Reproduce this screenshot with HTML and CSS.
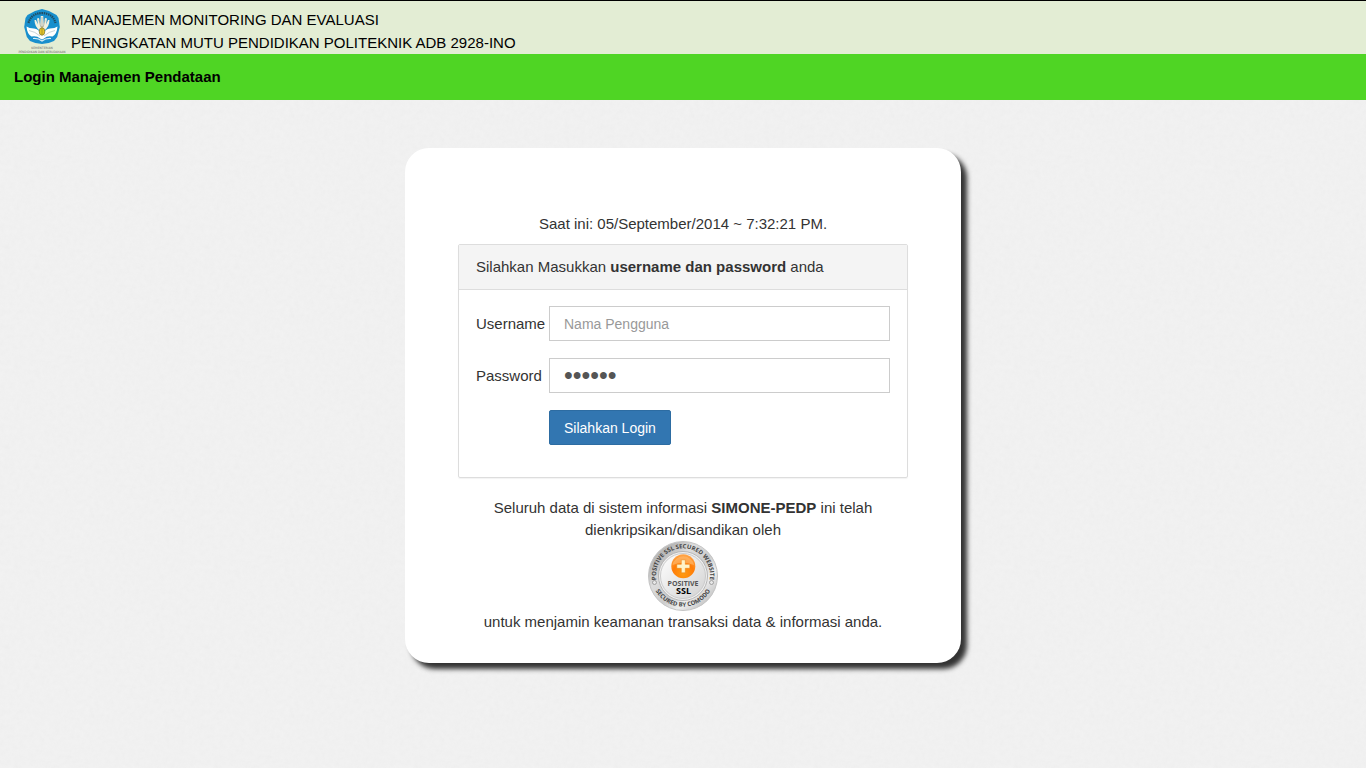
FILE: index.html
```html
<!DOCTYPE html>
<html lang="id">
<head>
<meta charset="utf-8">
<meta name="viewport" content="width=device-width, initial-scale=1">
<title>Login Manajemen Pendataan</title>
<link rel="stylesheet" href="styles.css">
</head>
<body>
<header class="banner">
  <svg class="banner-logo" viewBox="0 0 56 46" role="img" aria-label="Kementerian Pendidikan dan Kebudayaan">
    <path d="M28 1 L35 3 L42.500 7 L44.500 10 L45.800 19 L43.200 29 L40 33 Q34 36 28 36 Q22 36 16 33 L12.800 29 L10.200 19 L11.500 10 L13.500 7 L21 3 Z" fill="#188fcd"/>
    <path d="M14.500 15 Q17 5.500 28 5 Q39 5.500 41.500 15" fill="none" stroke="#214d61" stroke-width="2.200" stroke-dasharray="1.500 .7"/>
    <path d="M26.300 23 Q20.500 19 20.500 12 L22 12 L24 16.500 L23 10.500 L25 10 L26.200 16 L26.800 8 H29.200 L29.800 16 L31 10 L33 10.500 L32 16.500 L34 12 L35.500 12 Q35.500 19 29.700 23 Z" fill="#f2f1df"/>
    <path d="M28 9 V19 M25 12 L26.800 19 M31 12 L29.200 19" stroke="#8c9690" stroke-width=".6" fill="none"/>
    <path d="M12.500 18.500 Q15 20.500 20 20.500 Q25 21 26 25 L28 27 L30 25 Q31 21 36 20.500 Q41 20.500 43.500 18.500 Q43 26 38.500 28.500 Q33 27.500 30 30.500 L28 31.500 L26 30.500 Q23 27.500 17.500 28.500 Q13 26 12.500 18.500 Z" fill="#fff"/>
    <path d="M15 22.500 Q21 23.500 26 28 M41 22.500 Q35 23.500 30 28" stroke="#9fb5bd" stroke-width=".6" fill="none"/>
    <path d="M19 30.500 Q24 30 28 33 Q32 30 37 30.500" stroke="#d8edf5" stroke-width="1.200" fill="none"/>
    <ellipse cx="28" cy="23.500" rx="2.800" ry="3.800" fill="#e4c52b" stroke="#777133" stroke-width=".7"/>
    <path d="M28 18 V27" stroke="#8b7925" stroke-width=".6"/>
    <text x="28" y="41" text-anchor="middle" class="logo-caption">KEMENTERIAN</text>
    <text x="28" y="45" text-anchor="middle" class="logo-caption">PENDIDIKAN DAN KEBUDAYAAN</text>
  </svg>
  <div class="banner-title">MANAJEMEN MONITORING DAN EVALUASI<br>PENINGKATAN MUTU PENDIDIKAN POLITEKNIK ADB 2928-INO</div>
</header>
<h1 class="title-bar">Login Manajemen Pendataan</h1>
<main class="login-card">
  <p class="clock">Saat ini: 05/September/2014 ~ 7:32:21 PM.</p>
  <section class="panel">
    <h2 class="panel-heading">Silahkan Masukkan <strong>username dan password</strong> anda</h2>
    <form class="login-form">
      <label for="username">Username</label>
      <input class="field" id="username" type="text" placeholder="Nama Pengguna">
      <label for="password">Password</label>
      <input class="field field-password" id="password" type="password" value="simone">
      <button class="login-button" type="submit">Silahkan Login</button>
    </form>
  </section>
  <p class="security-note">Seluruh data di sistem informasi <strong>SIMONE-PEDP</strong> ini telah dienkripsikan/disandikan oleh</p>
  <svg class="seal" viewBox="0 0 70 70" role="img" aria-label="Positive SSL">
    <defs>
      <linearGradient id="rim" x1="0" y1="0" x2="1" y2="1">
        <stop offset="0" stop-color="#bdbdbd"/><stop offset=".2" stop-color="#b8b8b8"/><stop offset=".35" stop-color="#ddd"/><stop offset=".55" stop-color="#ccc"/><stop offset=".7" stop-color="#eee"/><stop offset="1" stop-color="#a6a6a6"/>
      </linearGradient>
      <linearGradient id="face" x1="0" y1="0" x2="1" y2="1">
        <stop offset="0" stop-color="#fff"/><stop offset="1" stop-color="#d2d2d2"/>
      </linearGradient>
      <radialGradient id="orb" cx=".5" cy=".8" r=".8">
        <stop offset="0" stop-color="#ff9c12"/><stop offset=".55" stop-color="#ff7d08"/><stop offset="1" stop-color="#ffa64a"/>
      </radialGradient>
      <path id="arc-top" d="M8.400 39 A27 27 0 1 1 61.600 39"/>
      <path id="arc-bottom" d="M4.500 42 A31.500 31.500 0 0 0 65.500 42"/>
    </defs>
    <circle cx="35" cy="35" r="34.500" fill="url(#rim)" stroke="#c4c4c4"/>
    <circle cx="35" cy="35" r="24.500" fill="#eee" stroke="#aaa" stroke-width=".8"/>
    <circle cx="35" cy="35" r="22.500" fill="url(#face)" stroke="#c2c2c2" stroke-width=".8"/>
    <text class="seal-rim"><textPath href="#arc-top" startOffset="50%" text-anchor="middle">POSITIVE SSL SECURED WEBSITE</textPath></text>
    <text class="seal-rim"><textPath href="#arc-bottom" startOffset="50%" text-anchor="middle">SECURED BY COMODO</textPath></text>
    <g fill="#e8e8e8" stroke="#888" stroke-width=".7"><circle cx="6.500" cy="41.500" r="2"/><circle cx="63.500" cy="41.500" r="2"/></g>
    <circle cx="35.300" cy="25.300" r="12" fill="url(#orb)"/>
    <path d="M24.500 24 A11 11 0 0 1 46 24 Q35 20 24.500 24 Z" fill="#ffc27c" opacity=".55"/>
    <path d="M33.300 18.800 H37.300 V23.300 H41.800 V27.300 H37.300 V31.800 H33.300 V27.300 H28.800 V23.300 H33.300 Z" fill="#fff3c8" stroke="#e97c0c" stroke-width=".5"/>
    <text x="35" y="45" text-anchor="middle" class="seal-name">POSITIVE</text>
    <text x="35.500" y="53" text-anchor="middle" class="seal-ssl">SSL</text>
  </svg>
  <p class="security-note">untuk menjamin keamanan transaksi data &amp; informasi anda.</p>
</main>
</body>
</html>
```
FILE: styles.css
```css
* {
  box-sizing: border-box;
}

body {
  margin: 0;
  background-color: #f2f2f2;
  background-image: url("data:image/svg+xml,%3Csvg xmlns='http://www.w3.org/2000/svg' width='200' height='200'%3E%3Cfilter id='n' x='0' y='0' width='1' height='1'%3E%3CfeTurbulence type='fractalNoise' baseFrequency='.2' numOctaves='3' stitchTiles='stitch'/%3E%3CfeColorMatrix type='saturate' values='0'/%3E%3C/filter%3E%3Crect width='200' height='200' filter='url(%23n)' opacity='.05'/%3E%3C/svg%3E");
  color: #333;
  font-family: "Liberation Sans", Arial, sans-serif;
  font-size: 15px;
  line-height: 22px;
}

p {
  margin: 0;
}

.banner {
  display: flex;
  gap: 1px;
  height: 54px;
  padding: 7px 14px 0;
  border-top: 1px solid #000;
  background: #e3edd4;
  color: #000;
}

.banner-logo {
  flex: none;
  width: 56px;
  height: 46px;
}

.logo-caption {
  fill: #666;
  font-family: "DejaVu Sans", sans-serif;
  font-size: 3px;
}

.banner-title {
  font-size: 15px;
  line-height: 23px;
}

.title-bar {
  margin: 0 0 48px;
  padding: 12px 14px;
  background: #4fd524;
  color: #000;
  font-size: 15px;
  line-height: 22px;
}

.login-card {
  max-width: 556px;
  margin: 0 auto 48px;
  padding: 65px 53px 30px;
  border-radius: 24px;
  background: #fff;
  box-shadow: 6px 6px 5px #333;
  text-align: center;
}

.clock {
  margin-bottom: 9px;
}

.panel {
  margin-bottom: 19px;
  border: 1px solid #ddd;
  border-radius: 2px;
  box-shadow: 0 1px 1px rgba(0, 0, 0, 0.05);
  text-align: left;
}

.panel-heading {
  margin: 0;
  padding: 11px 17px;
  border-bottom: 1px solid #ddd;
  background: #f4f4f4;
  font-size: 15px;
  font-weight: normal;
  line-height: 22px;
}

.login-form {
  display: grid;
  grid-template-columns: 73px 1fr;
  row-gap: 17px;
  align-items: center;
  padding: 16px 17px 32px;
}

.field {
  width: 100%;
  height: 35px;
  padding: 0 14px;
  border: 1px solid #ccc;
  border-radius: 0;
  background: #fff;
  color: #555;
  font-family: inherit;
  font-size: 14px;
}

.field-password {
  font-size: 25px;
}

.field::placeholder {
  color: #999;
}

.login-button {
  grid-column: 2;
  justify-self: start;
  height: 35px;
  padding: 0 14px;
  border: 1px solid #2d6ca2;
  border-radius: 2px;
  background: #3276b1;
  color: #fff;
  font-family: inherit;
  font-size: 14px;
}

.seal {
  display: block;
  width: 70px;
  height: 70px;
  margin: 0 auto;
}

.seal-rim {
  fill: #444;
  font-family: "Open Sans", sans-serif;
  font-size: 6px;
  font-weight: bold;
}

.seal-name {
  fill: #555;
  font-family: "Open Sans", sans-serif;
  font-size: 7px;
  font-weight: bold;
}

.seal-ssl {
  fill: #000;
  font-family: "Open Sans", sans-serif;
  font-size: 9px;
  font-weight: bold;
}
```
